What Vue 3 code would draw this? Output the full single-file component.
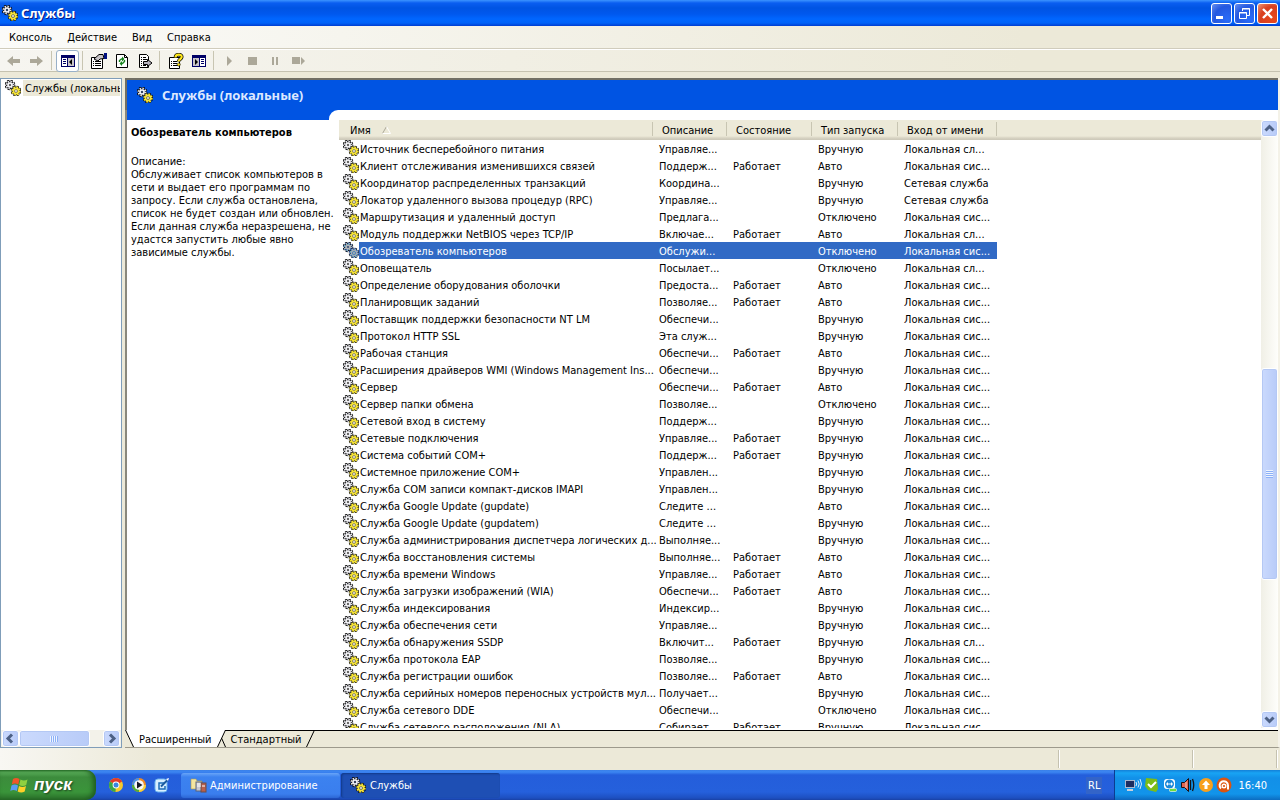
<template>
  <div class="window">
    <svg class="defs" width="0" height="0">
      <symbol id="gears" viewBox="0 0 16 16">
        <g fill="none">
          <circle cx="5" cy="5" r="4" stroke="#000" stroke-width="2.600" stroke-dasharray="2 1.140" />
          <circle cx="5" cy="5" r="3" stroke="#222" stroke-width="2.400" />
          <circle cx="5" cy="5" r="3.500" stroke="#e4e4ec" stroke-width="2" stroke-dasharray="1.400 1.350" />
          <circle cx="5" cy="5" r="2" stroke="#f4f4f8" stroke-width="1.600" />
          <circle cx="5" cy="5" r="1.100" fill="#444" />
          <circle cx="11" cy="11" r="4" stroke="#000" stroke-width="2.600" stroke-dasharray="2.200 .940" />
          <circle cx="11" cy="11" r="3" stroke="#222" stroke-width="2.600" />
          <circle cx="11" cy="11" r="3.700" stroke="#f6e436" stroke-width="2" stroke-dasharray="1.600 1.300" />
          <circle cx="11" cy="11" r="2.500" stroke="#f6e436" stroke-width="1.800" />
          <circle cx="11" cy="11" r="1.400" fill="#fff" stroke="#55501c" stroke-width=".600" />
        </g>
      </symbol>
    </svg>

    <header class="titlebar">
      <svg class="icon"><use href="#gears" /></svg>
      <h1>Службы</h1>
      <button class="win-btn" aria-label="Свернуть">
        <svg width="19" height="19"><path d="M4 12h7v3H4z" fill="#fff" /></svg>
      </button>
      <button class="win-btn" aria-label="Восстановить">
        <svg width="19" height="19" fill="none" stroke="#fff">
          <path d="M7.500 7V4.500H14.500V11.500H12M7 5h8M4.500 8.500h7v6h-7zM4 9h8" />
        </svg>
      </button>
      <button class="win-btn close" aria-label="Закрыть">
        <svg width="19" height="19"><path d="M5 5l9 9M14 5l-9 9" stroke="#fff" stroke-width="2.4" /></svg>
      </button>
    </header>

    <nav class="menubar">
      <button v-for="m in menus" :key="m">{{ m }}</button>
    </nav>

    <div class="toolbar">
      <button aria-label="Назад"><svg><path d="M1 8l6-5v3h7v4H7v3z" fill="#aca899" /></svg></button>
      <button aria-label="Вперед"><svg><path d="M14 8L8 3v3H1v4h7v3z" fill="#aca899" /></svg></button>
      <i></i>
      <button class="pressed" aria-label="Дерево консоли">
        <svg>
          <path d="M1 2h14v12H1z" fill="#000066" /><path d="M2 5h5v8H2z" fill="#fff" /><path d="M8 5h6v8H8z" fill="#c8c4c8" />
          <path d="M3 6h3v1H3zM3 8h3v1H3zM3 10h3v1H3z" fill="#000066" /><path d="M12 6v6L9 9z" fill="#000" />
        </svg>
      </button>
      <i></i>
      <button aria-label="Свойства">
        <svg>
          <path d="M.500 4.500h11v11H.500z" fill="#fff" stroke="#000" />
          <path d="M2 8h1v1H2zM4 8h6v1H4zM2 10h1v1H2zM4 10h6v1H4zM2 12h1v1H2zM4 12h6v1H4z" fill="#000" />
          <path d="M3 6l5-4.500h4l1 4-4 .5-2 2-2-1z" fill="#c8c4c8" stroke="#000" /><path d="M13 0h3v6h-3z" fill="#001080" />
        </svg>
      </button>
      <button aria-label="Обновить">
        <svg>
          <path d="M2.500 1.500h8l3 3v10h-11z" fill="#fff" stroke="#000" /><path d="M10.500 1.500v3h3" fill="none" stroke="#000" />
          <path d="M5.500 9V7.500l2-1.500h1M10.500 7v1.500l-2 2h-1" fill="none" stroke="#16841c" stroke-width="1.400" />
          <path d="M8 3.500v5L10.500 6zM8 8v5l-2.500-2.500z" fill="#16841c" />
        </svg>
      </button>
      <button aria-label="Экспортировать список">
        <svg>
          <path d="M2.500 1.500h7l2 2v11h-9z" fill="#fff" stroke="#000" />
          <path d="M4 4h1v1H4zM6 4h3v1H6zM4 6h1v1H4zM6 6h4v1H6zM4 8h1v1H4zM4 10h1v1H4zM4 12h1v1H4zM6 12h3v1H6z" fill="#000" />
          <path d="M6.500 8.500h4v-2l4.500 3.500-4.500 3.500v-2h-4z" fill="#b8b4c0" stroke="#000" />
        </svg>
      </button>
      <i></i>
      <button aria-label="Справка">
        <svg>
          <path d="M1.500 4.500h10v11h-10z" fill="#fff" stroke="#000" />
          <path d="M3 8h1v1H3zM5 8h4v1H5zM3 10h1v1H3zM5 10h4v1H5zM3 12h1v1H3zM5 12h5v1H5z" fill="#000" />
          <path d="M7.500 4.500C7.500.800 14 .800 13.700 4c-.2 2-3 2.200-3 4.500" fill="none" stroke="#000" stroke-width="3.600" />
          <path d="M7.500 4.500C7.500.800 14 .800 13.700 4c-.2 2-3 2.200-3 4.500" fill="none" stroke="#ffe81c" stroke-width="2.200" />
          <circle cx="10.700" cy="11.500" r="1.600" fill="#ffe81c" stroke="#000" stroke-width=".6" />
        </svg>
      </button>
      <button aria-label="Панель действий">
        <svg>
          <path d="M1 2h14v12H1z" fill="#000066" /><path d="M9 5h5v8H9z" fill="#fff" /><path d="M2 5h6v8H2z" fill="#c8c4c8" />
          <path d="M10 6h3v1h-3zM10 8h3v1h-3zM10 10h3v1h-3z" fill="#000066" /><path d="M4 6v6l3-3z" fill="#000" />
        </svg>
      </button>
      <i></i>
      <button aria-label="Запуск"><svg><path d="M5 3v10l5-5z" fill="#aca899" /></svg></button>
      <button aria-label="Остановка"><svg><path d="M3 4h9v8H3z" fill="#aca899" /></svg></button>
      <button aria-label="Пауза"><svg><path d="M4 4h2v8H4zM8 4h2v8H8z" fill="#aca899" /></svg></button>
      <button aria-label="Перезапуск"><svg><path d="M1 4h8v7H1zM10 4v8l4-4z" fill="#aca899" /></svg></button>
    </div>

    <main class="panes">
      <section class="tree">
        <div class="tree-item">
          <svg class="icon"><use href="#gears" /></svg>
          <a href="#">Службы (локальные)</a>
        </div>
        <div class="hscroll">
          <button aria-label="Влево"><svg width="15" height="15"><path d="M9 3.500L5 7.500l4 4" /></svg></button>
          <div class="hthumb"><b></b></div>
          <button aria-label="Вправо"><svg width="15" height="15"><path d="M6 3.500l4 4-4 4" /></svg></button>
        </div>
      </section>

      <section class="result">
        <div class="banner">
          <svg class="icon"><use href="#gears" /></svg>
          <h2>Службы (локальные)</h2>
        </div>
        <div class="extended">
          <aside class="info">
            <h3>Обозреватель компьютеров</h3>
            <p>Описание:<br>Обслуживает список компьютеров в<br>сети и выдает его программам по<br>запросу. Если служба остановлена,<br>список не будет создан или обновлен.<br>Если данная служба неразрешена, не<br>удастся запустить любые явно<br>зависимые службы.</p>
          </aside>
          <div class="list-wrap">
            <div class="list">
              <table>
                <colgroup>
                  <col class="c-name"><col class="c-desc"><col class="c-state"><col class="c-type"><col class="c-login"><col>
                </colgroup>
                <thead>
                  <tr>
                    <th>Имя <svg class="sort" width="9" height="8"><path d="M.500 7.500L4.500.500" stroke="#aca899" /><path d="M4.500.500l4 7h-8" stroke="#fff" fill="none" /></svg></th>
                    <th>Описание</th>
                    <th>Состояние</th>
                    <th>Тип запуска</th>
                    <th>Вход от имени</th>
                    <th></th>
                  </tr>
                </thead>
                <tbody>
                  <tr v-for="(s, i) in services" :key="s[0]" :class="{ selected: i === selected }" @click="selected = i">
                    <td class="name">
                      <div class="name-cell">
                        <span class="glyph"><svg class="icon"><use href="#gears" /></svg></span>
                        <span class="label">{{ s[0] }}</span>
                      </div>
                    </td>
                    <td>{{ s[1] }}</td>
                    <td>{{ s[2] ? 'Работает' : '' }}</td>
                    <td>{{ types[s[3]] }}</td>
                    <td>{{ logins[s[4]] }}</td>
                    <td class="rest"></td>
                  </tr>
                </tbody>
              </table>
            </div>
            <div class="vscroll">
              <button aria-label="Вверх"><svg width="13" height="15"><path d="M2.500 9.500l4-4 4 4" /></svg></button>
              <div class="before"></div>
              <div class="vthumb"><b></b></div>
              <div class="after"></div>
              <button aria-label="Вниз"><svg width="13" height="15"><path d="M2.500 5.500l4 4 4-4" /></svg></button>
            </div>
          </div>
        </div>
        <div class="tabs">
          <svg width="9" height="17"><path d="M0 0h9v17z" fill="#fff" /><path d="M.500 0l8 17" stroke="#000" /></svg>
          <button class="active">Расширенный</button>
          <svg width="9" height="17">
            <path d="M0 0h8.500L0 17z" fill="#fff" /><path d="M8.500 0L.500 17M4.500 8l4 9M8 .500h1" stroke="#000" />
          </svg>
          <button>Стандартный</button>
          <svg width="9" height="17"><path d="M8.500 0L.500 17M0 .500h9" stroke="#000" /></svg>
          <div class="tab-rest"></div>
        </div>
      </section>
    </main>

    <div class="statusbar"><span></span><span></span><span></span></div>

    <footer class="taskbar">
      <button class="start">
        <svg width="20" height="20" viewBox="0 0 20 20">
          <path d="M3 4q3-2 6.500 0L8.300 9.500q-3.300-1.800-6.500 0z" fill="#f0552a" />
          <path d="M10.500 4.500q3.500 2 7 0L16.200 10q-3.500 1.800-7 0z" fill="#8fd040" />
          <path d="M1.500 10.500q3.300-1.800 6.500 0L6.800 16q-3.300-1.800-6.500 0z" fill="#5a9cf5" />
          <path d="M9 11q3.500 1.800 7 0l-1.300 5.500q-3.500 1.800-7 0z" fill="#ffd028" />
        </svg>
        <span>пуск</span>
      </button>
      <div class="quick">
        <a href="#" aria-label="Chrome">
          <svg width="16" height="16">
            <circle cx="8" cy="8" r="7" fill="#f5c92c" /><path d="M8 8L1.900 4.500A7 7 0 0 1 14.100 4.500z" fill="#e23b2a" />
            <path d="M8 8L1.900 4.500A7 7 0 0 0 7.500 15z" fill="#3aa648" />
            <circle cx="8" cy="8" r="3.400" fill="#fff" /><circle cx="8" cy="8" r="2.500" fill="#3a86e0" />
          </svg>
        </a>
        <a href="#" aria-label="Media Player">
          <svg width="16" height="16">
            <circle cx="8" cy="8" r="7" fill="#f08a24" /><path d="M8 8V1a7 7 0 0 0-7 7z" fill="#4a90e0" /><path d="M8 8v7a7 7 0 0 0 7-7z" fill="#f5d23c" />
            <path d="M8 8v7a7 7 0 0 1-7-7z" fill="#4cae3c" />
            <circle cx="8" cy="8" r="4.800" fill="#f8f8f8" /><path d="M6 4.500v7L11.500 8z" fill="#1a1a28" />
          </svg>
        </a>
        <a href="#" aria-label="Свернуть все окна">
          <svg width="16" height="16">
            <rect x="1" y="2" width="12" height="13" rx="3" fill="#d8efff" stroke="#6cb4ee" />
            <path d="M10 6H5v6h6V9" fill="none" stroke="#1c6cb8" stroke-width="1.500" /><path d="M7 9.500L13.500 3" stroke="#1c5ca0" stroke-width="2" /><path d="M12 2l3-1-1 3z" fill="#fff" />
          </svg>
        </a>
      </div>
      <button class="task">
        <svg width="18" height="16">
          <path d="M1 2h5l1 2h5v8H1z" fill="#f4e6a0" stroke="#a89858" stroke-width=".6" />
          <rect x="6" y="5" width="6" height="9" fill="#c8c8d0" stroke="#5c6478" /><rect x="11" y="6" width="5" height="9" fill="#b8604c" stroke="#6c4c48" />
          <path d="M7 7h4M7 9h4M12 9h3" stroke="#fff" />
        </svg>
        Администрирование
      </button>
      <button class="task current">
        <svg class="icon"><use href="#gears" /></svg>
        Службы
      </button>
      <button class="lang">RL</button>
      <div class="tray">
        <svg width="18" height="16">
          <rect x="1.500" y="3.500" width="9" height="7" fill="#1c2c60" stroke="#a8b8d0" /><path d="M3 12h6v2H3z" fill="#c8d0dc" />
          <path d="M12 5q1.500 2 0 4M14 3.500q2.400 3.500 0 7M16 2q3 5 0 10" fill="none" stroke="#d8ecff" />
        </svg>
        <svg width="16" height="16"><path d="M2 1l11 1 1 10-2 3L4 13 1 9z" fill="#7cbc18" /><path d="M4 7l3 3 5-5" stroke="#fff" stroke-width="2" fill="none" /></svg>
        <svg width="16" height="16">
          <rect x="2" y="2" width="11" height="10" rx="3" fill="#fff" /><circle cx="7.500" cy="7" r="4.500" fill="#1c88d8" />
          <path d="M4 7l2-2v1.500h3V5l2 2-2 2V7.500H6V9z" fill="#fff" /><rect x="7.500" y="11.500" width="7" height="3" rx="1" fill="#6cdc3c" stroke="#fff" stroke-width=".6" />
        </svg>
        <svg width="16" height="16">
          <path d="M1.500 5.500h3l4-4v13l-4-4h-3z" fill="#e06450" stroke="#201010" /><path d="M6 5v6" stroke="#f8c8b8" />
          <path d="M10.500 3v10M12.500 2q2.500 6 0 12" fill="none" stroke="#141418" stroke-width="1.300" />
        </svg>
        <svg width="16" height="16"><circle cx="8" cy="8" r="7" fill="#f8a01c" /><path d="M8 3.500l4 4.500H9.500v4h-3V8H4z" fill="#fff" /></svg>
        <svg width="16" height="16">
          <circle cx="8" cy="8" r="7.500" fill="#dc5410" /><path d="M5 11.500a4.200 4.200 0 1 1 7-3v4" fill="none" stroke="#fff" stroke-width="2" />
          <circle cx="8" cy="9" r="1.800" fill="none" stroke="#fff" stroke-width="1.400" />
        </svg>
        <time>16:40</time>
      </div>
    </footer>
  </div>
</template>

<script setup>
import { ref } from "vue";

const menus = ["Консоль", "Действие", "Вид", "Справка"];
const types = ["Вручную", "Авто", "Отключено"];
const logins = ["Локальная сис...", "Локальная сл...", "Сетевая служба"];
const selected = ref(6);

// имя, описание, работает, тип запуска, вход от имени
const services = [
  ["Источник бесперебойного питания", "Управляе...", 0, 0, 1],
  ["Клиент отслеживания изменившихся связей", "Поддерж...", 1, 1, 0],
  ["Координатор распределенных транзакций", "Координа...", 0, 0, 2],
  ["Локатор удаленного вызова процедур (RPC)", "Управляе...", 0, 0, 2],
  ["Маршрутизация и удаленный доступ", "Предлага...", 0, 2, 0],
  ["Модуль поддержки NetBIOS через TCP/IP", "Включае...", 1, 1, 1],
  ["Обозреватель компьютеров", "Обслужи...", 0, 2, 0],
  ["Оповещатель", "Посылает...", 0, 2, 1],
  ["Определение оборудования оболочки", "Предоста...", 1, 1, 0],
  ["Планировщик заданий", "Позволяе...", 1, 1, 0],
  ["Поставщик поддержки безопасности NT LM", "Обеспечи...", 0, 0, 0],
  ["Протокол HTTP SSL", "Эта служ...", 0, 0, 0],
  ["Рабочая станция", "Обеспечи...", 1, 1, 0],
  ["Расширения драйверов WMI (Windows Management Ins...", "Обеспечи...", 0, 0, 0],
  ["Сервер", "Обеспечи...", 1, 1, 0],
  ["Сервер папки обмена", "Позволяе...", 0, 2, 0],
  ["Сетевой вход в систему", "Поддерж...", 0, 0, 0],
  ["Сетевые подключения", "Управляе...", 1, 0, 0],
  ["Система событий COM+", "Поддерж...", 1, 0, 0],
  ["Системное приложение COM+", "Управлен...", 0, 0, 0],
  ["Служба COM записи компакт-дисков IMAPI", "Управлен...", 0, 0, 0],
  ["Служба Google Update (gupdate)", "Следите ...", 0, 1, 0],
  ["Служба Google Update (gupdatem)", "Следите ...", 0, 0, 0],
  ["Служба администрирования диспетчера логических д...", "Выполняе...", 0, 0, 0],
  ["Служба восстановления системы", "Выполняе...", 1, 1, 0],
  ["Служба времени Windows", "Управляе...", 1, 1, 0],
  ["Служба загрузки изображений (WIA)", "Обеспечи...", 1, 1, 0],
  ["Служба индексирования", "Индексир...", 0, 0, 0],
  ["Служба обеспечения сети", "Управляе...", 0, 0, 0],
  ["Служба обнаружения SSDP", "Включит...", 1, 0, 1],
  ["Служба протокола EAP", "Позволяе...", 0, 0, 0],
  ["Служба регистрации ошибок", "Позволяе...", 1, 1, 0],
  ["Служба серийных номеров переносных устройств мул...", "Получает...", 0, 0, 0],
  ["Служба сетевого DDE", "Обеспечи...", 0, 2, 0],
  ["Служба сетевого расположения (NLA)", "Собирает...", 1, 0, 0],
];
</script>

<style>
body {
  margin: 0;
  background: #ece9d8;
}
</style>

<style scoped>
.window {
  display: flex;
  flex-direction: column;
  height: 100vh;
  overflow: hidden;
  background: #ece9d8;
  color: #000;
  font: 11px/13px "DejaVu Sans Condensed", "Noto Sans", sans-serif;
}

.defs {
  position: absolute;
}

button {
  margin: 0;
  padding: 0;
  border: 0;
  background: none;
  color: inherit;
  font: inherit;
}

a {
  color: inherit;
  text-decoration: none;
}

h1,
h2,
h3,
p {
  margin: 0;
}

svg {
  display: block;
  flex: none;
}

.icon {
  width: 16px;
  height: 16px;
}

.titlebar {
  display: flex;
  align-items: center;
  flex: none;
  gap: 2px;
  height: 26px;
  padding: 0 2px;
  background: linear-gradient(#3c94ff 0, #0a5ef0 3px, #0054e3 8px, #0058ee 14px, #0066ff 19px, #0062f8 23px, #003dd0 26px);
  color: #fff;
}

.titlebar h1 {
  flex: 1;
  padding-left: 1px;
  font: bold 13px/16px "Noto Sans", sans-serif;
  text-shadow: 1px 1px #0a1883;
}

.win-btn {
  box-sizing: border-box;
  width: 21px;
  height: 21px;
  border: 1px solid #fff;
  border-radius: 3px;
  background: radial-gradient(circle at 80% 80%, #2a6cf8, #2458e0 60%, #6890f0);
}

.win-btn.close {
  background: radial-gradient(circle at 80% 80%, #e8481c, #d84020 60%, #f09878);
}

.menubar {
  display: flex;
  flex: none;
  height: 22px;
  padding-left: 1px;
  border-bottom: 1px solid #d0ccbc;
  background: linear-gradient(90deg, #fbfbf9, #ece9d8 80%);
}

.menubar button {
  padding: 0 7px 0 8px;
}

.toolbar {
  display: flex;
  align-items: center;
  flex: none;
  height: 21px;
  padding-left: 2px;
  border-top: 1px solid #fff;
  border-bottom: 1px solid #c5c2b0;
  background: linear-gradient(90deg, #f6f5f0, #ece9d8 80%);
}

.toolbar button {
  display: flex;
  align-items: center;
  justify-content: center;
  box-sizing: border-box;
  width: 23px;
  height: 22px;
}

.toolbar button svg {
  width: 16px;
  height: 16px;
}

.toolbar .pressed {
  border: 1px solid #98b0c8;
  border-radius: 3px;
  background: #fff;
}

.toolbar i {
  box-sizing: border-box;
  width: 8px;
  height: 19px;
  border-left: 3px solid transparent;
  background: linear-gradient(#c8c5b2, #c8c5b2) 0 0 / 1px 100% no-repeat;
}

.panes {
  display: flex;
  flex: 1;
  gap: 3px;
  min-height: 0;
  padding: 6px 0 0;
}

.tree {
  display: flex;
  flex-direction: column;
  box-sizing: border-box;
  width: 122px;
  border: 1px solid #7f9db9;
  background: #fff;
}

.tree-item {
  display: flex;
  flex: 1;
  align-items: flex-start;
  gap: 2px;
  min-height: 0;
  padding: 1px 1px 0 4px;
  overflow: hidden;
  white-space: nowrap;
}

.tree-item a {
  flex: 1;
  padding: 2px 0 1px 2px;
  overflow: hidden;
  background: #ece9d8;
}

.hscroll {
  display: flex;
  height: 17px;
  padding: 0 1px;
  background: #f3f2ea;
}

.hscroll button,
.vscroll button,
.hthumb,
.vthumb {
  display: flex;
  align-items: center;
  justify-content: center;
  box-sizing: border-box;
  border: 1px solid #fff;
  border-radius: 3px;
  background: linear-gradient(90deg, #cbdafd, #b8cbf8);
  box-shadow: inset 0 0 0 1px #b4c8f4;
}

.hscroll button {
  width: 17px;
  height: 17px;
}

.hscroll button:last-child {
  margin-left: auto;
}

.hscroll path,
.vscroll path {
  fill: none;
  stroke: #4d6185;
  stroke-width: 3;
}

.hthumb {
  width: 60%;
}

.hthumb b {
  width: 8px;
  height: 6px;
  background: repeating-linear-gradient(90deg, #eef4fe 0 1px, #8cb0f8 1px 2px);
}

.result {
  display: flex;
  flex: 1;
  flex-direction: column;
  min-width: 0;
  border-right: 2px solid #f4f2e8;
  border-bottom: 1px solid #9d9a8c;
}

.banner {
  display: flex;
  align-items: center;
  flex: none;
  gap: 9px;
  height: 30px;
  padding-left: 10px;
  border-top: 2px solid #716f64;
  border-left: 2px solid #716f64;
  background: #0054e3;
  color: #dce8ff;
}

.banner h2 {
  font: bold 13px/16px "Noto Sans", sans-serif;
}

.extended {
  display: flex;
  flex: 1;
  min-height: 0;
  border-left: 2px solid #8a887c;
  background: #0054e3;
}

/* longest line of the description runs a little past the column */
.info {
  position: relative;
  z-index: 1;
  box-sizing: border-box;
  width: 202px;
  padding: 6px 0 0 4px;
  border-top: 10px solid #0054e3;
  background: #fff;
  white-space: nowrap;
}

.info h3 {
  margin-bottom: 16px;
  font-size: 11px;
  font-weight: bold;
}

.list-wrap {
  display: flex;
  flex: 1;
  min-width: 0;
  padding: 10px 0 2px 10px;
  border-radius: 9px 0 0 0;
  background: #fff;
}

.list {
  flex: 1;
  min-width: 0;
  overflow: hidden;
}

table {
  width: 100%;
  border-collapse: collapse;
  table-layout: fixed;
}

.c-name {
  width: 314px;
}

.c-desc {
  width: 74px;
}

.c-state {
  width: 85px;
}

.c-type {
  width: 86px;
}

.c-login {
  width: 99px;
}

th {
  height: 20px;
  padding: 0 0 0 9px;
  background: linear-gradient(90deg, #c8c5b2, #c8c5b2) 100% 2px / 1px 14px no-repeat,
    linear-gradient(#ece9d8 16px, #e2decd 17px, #d6d2c2 18px, #cbc7b8 20px);
  font-weight: normal;
  text-align: left;
  white-space: nowrap;
}

th:first-child {
  padding-left: 11px;
}

th:last-child {
  background: linear-gradient(#ece9d8 16px, #e2decd 17px, #d6d2c2 18px, #cbc7b8 20px);
}

.sort {
  display: inline-block;
  margin-left: 8px;
}

td {
  height: 15px;
  padding: 2px 0 0 6px;
  line-height: 15px;
  white-space: nowrap;
}

.name {
  padding: 0;
}

.name-cell {
  display: flex;
  height: 17px;
}

.glyph {
  flex: none;
  width: 16px;
  padding-left: 4px;
  background: #fff;
}

.label {
  flex: 1;
  min-width: 0;
  padding: 2px 0 0 1px;
}

.selected td {
  background: #316ac5;
  color: #fff;
}

.selected .rest {
  background: #fff;
}

.selected .icon {
  filter: sepia(1) hue-rotate(180deg) saturate(3) brightness(.7);
}

.vscroll {
  display: flex;
  flex-direction: column;
  width: 17px;
  background: linear-gradient(90deg, #f0efe6, #fefefb);
}

.vscroll button {
  height: 17px;
}

.before {
  flex: 232;
}

.vthumb {
  flex: 211;
}

.after {
  flex: 131;
}

.vthumb b {
  width: 7px;
  height: 8px;
  background: repeating-linear-gradient(#eef4fe 0 1px, #8cb0f8 1px 2px);
}

.tabs {
  display: flex;
  flex: none;
  height: 17px;
}

.tabs button {
  padding: 0 5px;
  border-top: 1px solid #000;
}

.tabs .active {
  border-color: #fff;
  background: #fff;
}

.tab-rest {
  flex: 1;
  border-top: 1px solid #000;
}

.statusbar {
  display: flex;
  justify-content: flex-end;
  box-sizing: border-box;
  flex: none;
  height: 22px;
  padding: 2px 3px 0 0;
  background: linear-gradient(90deg, #f8f7f3, #ece9d8 12%);
}

.statusbar span {
  box-sizing: border-box;
  width: 84px;
  height: 18px;
  border-right: 1px solid #c5c2b0;
  box-shadow: 1px 0 #fff;
}

.statusbar span:nth-child(2) {
  width: 134px;
}

.taskbar {
  display: flex;
  align-items: center;
  flex: none;
  height: 30px;
  background: linear-gradient(#3a80e8 0, #3c86f2 2px, #245edb 5px, #2560dc 22px, #1d4fc0 28px, #1941a5 30px);
  color: #fff;
}

.start {
  display: flex;
  align-items: center;
  gap: 4px;
  box-sizing: border-box;
  width: 96px;
  height: 30px;
  padding-left: 10px;
  border-radius: 0 10px 10px 0;
  background: linear-gradient(#2f7a30 0, #5cb05c 2px, #3c8c3c 7px, #3a943a 22px, #2a702a 30px);
  box-shadow: inset -3px 0 5px #1f5c1f;
  font: italic bold 17px/20px "Liberation Sans", sans-serif;
  text-shadow: 1px 1px 2px #1c3c1c;
}

.quick {
  display: flex;
  gap: 7px;
  padding: 0 11px 0 12px;
}

.task {
  display: flex;
  align-items: center;
  gap: 2px;
  box-sizing: border-box;
  width: 159px;
  height: 25px;
  margin-right: 1px;
  padding-left: 9px;
  border-radius: 3px;
  background: linear-gradient(#68a4f8, #3c82f0 4px, #3a7eee 21px, #2c66d4);
}

.task.current {
  gap: 4px;
  background: #1e4fb4;
  box-shadow: inset 1px 1px 2px #123a88;
}

.lang {
  margin-left: auto;
  margin-right: 12px;
  padding: 2px;
  background: #3364c8;
}

.tray {
  display: flex;
  align-items: center;
  gap: 2px;
  box-sizing: border-box;
  height: 30px;
  padding: 0 13px 0 9px;
  border-left: 1px solid #0c3c90;
  background: linear-gradient(#1480d8 0, #18a4f4 3px, #1290e8 8px, #1294ea 24px, #0c6cc0 30px);
}

.tray time {
  padding-left: 4px;
}
</style>
